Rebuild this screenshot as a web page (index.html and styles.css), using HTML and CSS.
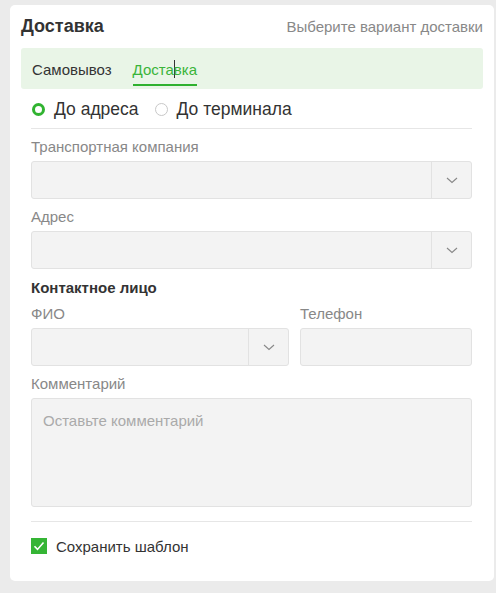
FILE: index.html
```html
<!DOCTYPE html>
<html lang="ru">
<head>
<meta charset="utf-8">
<link rel="stylesheet" href="styles.css">
</head>
<body>
<div class="card">
  <div class="card-head">
    <div class="title">Доставка</div>
    <div class="hint">Выберите вариант доставки</div>
  </div>
  <div class="tabs">
    <div class="tab">Самовывоз</div>
    <div class="tab active">Доста<span class="caret"></span>вка</div>
  </div>
  <div class="body">
    <div class="radios">
      <label class="radio checked"><span class="dot"></span>До адреса</label>
      <label class="radio"><span class="dot"></span>До терминала</label>
    </div>
    <div class="label">Транспортная компания</div>
    <div class="select"><div class="value"></div><div class="arrow"><svg width="12" height="7" viewBox="0 0 12 7"><path d="M1 1l5 4.5L11 1" fill="none" stroke="#888" stroke-width="1.1"/></svg></div></div>
    <div class="label">Адрес</div>
    <div class="select"><div class="value"></div><div class="arrow"><svg width="12" height="7" viewBox="0 0 12 7"><path d="M1 1l5 4.5L11 1" fill="none" stroke="#888" stroke-width="1.1"/></svg></div></div>
    <div class="section">Контактное лицо</div>
    <div class="row">
      <div class="col col-name">
        <div class="label">ФИО</div>
        <div class="select"><div class="value"></div><div class="arrow"><svg width="12" height="7" viewBox="0 0 12 7"><path d="M1 1l5 4.5L11 1" fill="none" stroke="#888" stroke-width="1.1"/></svg></div></div>
      </div>
      <div class="col col-phone">
        <div class="label">Телефон</div>
        <div class="input"></div>
      </div>
    </div>
    <div class="label">Комментарий</div>
    <div class="textarea">Оставьте комментарий</div>
    <div class="footer">
      <label class="check"><span class="box"><svg width="16" height="16" viewBox="0 0 16 16"><path d="M3.5 8.2l3 3.2 6-7" fill="none" stroke="#fff" stroke-width="1.6"/></svg></span>Сохранить шаблон</label>
    </div>
  </div>
</div>
</body>
</html>
```
FILE: styles.css
```css
html, body {
  margin: 0;
  padding: 0;
  background: #ebebeb;
  font-family: "Liberation Sans", Arial, sans-serif;
}
.card {
  margin: 5px 2px 0 10px;
  width: 484px;
  height: 576px;
  box-sizing: border-box;
  background: #fff;
  border-radius: 5px;
  padding: 0 11px;
}
.card-head {
  height: 43px;
  display: flex;
  align-items: center;
  justify-content: space-between;
}
.title {
  font-size: 18px;
  font-weight: bold;
  color: #333;
}
.hint {
  font-size: 15px;
  color: #888;
}
.tabs {
  height: 41px;
  background: #e9f5e7;
  border-radius: 3px;
  display: flex;
  padding: 0 11px;
  gap: 21px;
}
.tab {
  height: 38px;
  box-sizing: border-box;
  padding-top: 6px;
  display: flex;
  align-items: center;
  font-size: 15px;
  color: #333;
  border-bottom: 2px solid transparent;
}
.tab.active {
  color: #3ab43a;
  border-bottom-color: #2fb12f;
}
.caret {
  display: inline-block;
  width: 1px;
  height: 18px;
  background: #333;
  margin-right: -1px;
  vertical-align: middle;
}
.body {
  padding: 0 11px 0 10px;
}
.radios {
  height: 38px;
  padding-top: 1px;
  display: flex;
  align-items: center;
  gap: 16px;
  border-bottom: 1px solid #e6e6e6;
}
.radio {
  display: flex;
  align-items: center;
  font-size: 17.5px;
  color: #333;
}
.radio.checked {
  margin-left: 1px;
}
.dot {
  width: 13px;
  height: 13px;
  box-sizing: border-box;
  border-radius: 50%;
  border: 1px solid #c8c8c8;
  margin-right: 9px;
}
.radio.checked .dot {
  border: 3.5px solid #30b330;
}
.label {
  font-size: 15px;
  line-height: 16px;
  color: #888;
  padding: 10px 0 6px;
}
.select, .input {
  height: 38px;
  box-sizing: border-box;
  background: #f3f3f3;
  border: 1px solid #e2e2e2;
  border-radius: 3px;
  display: flex;
}
.select .value {
  flex: 1;
}
.select .arrow {
  width: 39px;
  border-left: 1px solid #e2e2e2;
  display: flex;
  align-items: center;
  justify-content: center;
}
.section {
  font-size: 15px;
  font-weight: bold;
  color: #333;
  line-height: 16px;
  padding-top: 11px;
}
.row {
  display: flex;
  gap: 11px;
}
.col-name {
  width: 258px;
}
.col-phone {
  flex: 1;
}
.textarea {
  height: 109px;
  box-sizing: border-box;
  background: #f3f3f3;
  border: 1px solid #e2e2e2;
  border-radius: 3px;
  padding: 13px 11px;
  font-size: 15px;
  color: #aaa;
}
.footer {
  margin-top: 14px;
  border-top: 1px solid #e6e6e6;
  padding-top: 16px;
}
.check {
  display: flex;
  align-items: center;
  font-size: 15px;
  color: #333;
  height: 16px;
}
.box {
  width: 16px;
  height: 16px;
  background: #35b535;
  margin-right: 9px;
  display: flex;
}
```
